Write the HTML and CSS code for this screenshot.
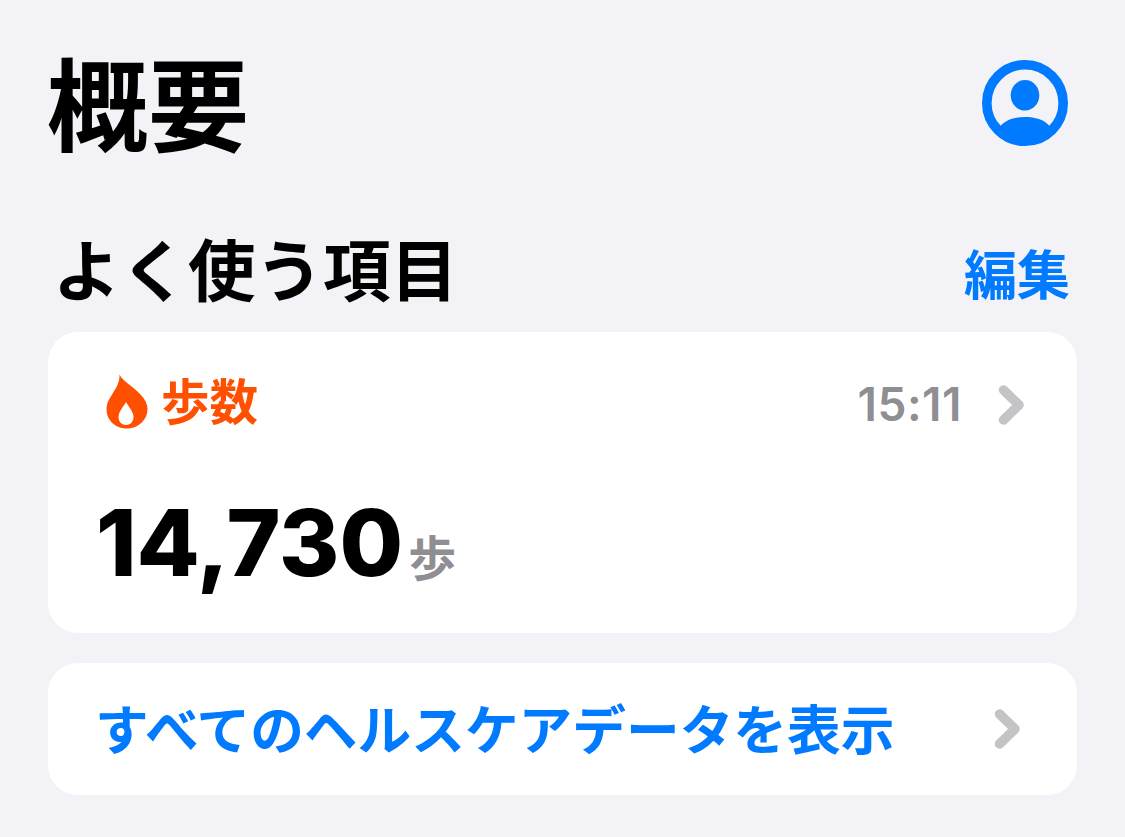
FILE: index.html
```html
<!DOCTYPE html>
<html lang="ja">
<head>
  <meta charset="UTF-8">
  <title>概要</title>
  <link rel="stylesheet" href="styles.css">
</head>
<body>

  <!-- ヘッダー -->
  <div class="header">
    <h1>概要</h1>
    <svg class="profile" viewBox="0 0 86 86" width="86" height="86">
      <circle cx="43" cy="43" r="38.200" fill="none" stroke="#007aff" stroke-width="9.600"/>
      <ellipse cx="43" cy="35.300" rx="14.300" ry="15.300" fill="#007aff"/>
      <path d="M18.500 66 C24 59.500 33 57 43 57 C53 57 62 59.500 67.500 66 C62 76 53 81 43 81 C33 81 24 76 18.500 66 Z" fill="#007aff"/>
    </svg>
  </div>

  <div class="section">
    <h2>よく使う項目</h2>
    <a class="edit">編集</a>
  </div>

  <!-- 歩数 -->
  <div class="card steps">
    <div class="steps-top">
      <svg class="flame" viewBox="0 0 44 56" width="44" height="56">
        <path fill-rule="evenodd" fill="#ff4f00" d="M15.500 1.500 C19 9 29 13 36 21 C41 26 43.500 31 43.500 36 C43.500 47 34 55.500 23 55.500 C11 55.500 2.500 47 2.500 36 C2.500 29 6 25 9 20 C12 15 16 9 15.500 1.500 Z M22 29 C19 34 14.500 39 14.500 44 C14.500 49 18 52 22 52 C26 52 29.500 49 29.500 44 C29.500 39 25 34 22 29 Z"/>
      </svg>
      <span class="steps-title">歩数</span>
      <span class="time">15:11</span>
      <svg class="chev" viewBox="0 0 28 42" width="28" height="42">
        <path d="M5.500 6 L21 21 L5.500 36" fill="none" stroke="#c4c4c7" stroke-width="9.500" stroke-linecap="round" stroke-linejoin="round"/>
      </svg>
    </div>
    <div class="steps-value">
      <span class="num">14,730</span>
      <span class="unit">歩</span>
    </div>
  </div>

  <!-- すべて表示 -->
  <div class="card all">
    <span class="all-text">すべてのヘルスケアデータを表示</span>
    <svg class="chev" viewBox="0 0 28 42" width="28" height="42">
      <path d="M5.500 6 L21 21 L5.500 36" fill="none" stroke="#c4c4c7" stroke-width="9.500" stroke-linecap="round" stroke-linejoin="round"/>
    </svg>
  </div>

</body>
</html>
```

FILE: styles.css
```css
body {
  background-color: #f2f2f7;
  font-family: "Inter", "Liberation Sans", "Noto Sans CJK JP", sans-serif;
  margin: 0;
  padding: 0 48px;
  color: black;
}

.header {
  display: flex;
  align-items: center;
  justify-content: space-between;
  height: 208px;
  padding-right: 9px;
}

h1 {
  font-size: 101px;
  font-weight: 700;
  line-height: 100px;
  margin: 6px 0 0 -1px;
}

.profile {
  display: block;
  margin-bottom: 2px;
}

.section {
  display: flex;
  align-items: center;
  justify-content: space-between;
  height: 124px;
  padding: 0 7px 0 5px;
  box-sizing: border-box;
}

h2 {
  font-size: 67.500px;
  font-weight: 700;
  margin: 4px 0 0;
  line-height: 80px;
}

.edit {
  color: #007aff;
  font-size: 53px;
  font-weight: 700;
  line-height: 60px;
  margin-top: 12px;
}

.card {
  background: white;
  border-radius: 30px;
}

.steps {
  height: 301px;
  padding: 0 51px 0 48px;
  box-sizing: border-box;
}

.steps-top {
  display: flex;
  align-items: center;
  padding-top: 41px;
}

.flame {
  display: block;
  margin-left: 8px;
  margin-bottom: 4px;
}

.steps-title {
  color: #ff4f00;
  font-size: 48.500px;
  font-weight: 700;
  line-height: 60px;
  margin-left: 13px;
}

.time {
  color: #8e8e93;
  font-size: 46px;
  font-weight: 600;
  letter-spacing: 0.500px;
  margin-left: auto;
  margin-right: 36px;
  margin-top: 2px;
}

.chev {
  display: block;
}

.steps-top .chev {
  margin-top: 3px;
}

.steps-value {
  display: flex;
  align-items: baseline;
  margin-top: 60px;
}

.num {
  font-size: 92px;
  font-weight: 800;
  line-height: 100px;
}

.unit {
  color: #8e8e93;
  font-size: 48px;
  font-weight: 700;
  margin-left: 5px;
}

.all {
  display: flex;
  align-items: center;
  justify-content: space-between;
  height: 132px;
  margin-top: 30px;
  padding: 0 55px 0 47px;
}

.all-text {
  color: #007aff;
  font-size: 53.700px;
  font-weight: 700;
  margin-bottom: 5px;
}
```
